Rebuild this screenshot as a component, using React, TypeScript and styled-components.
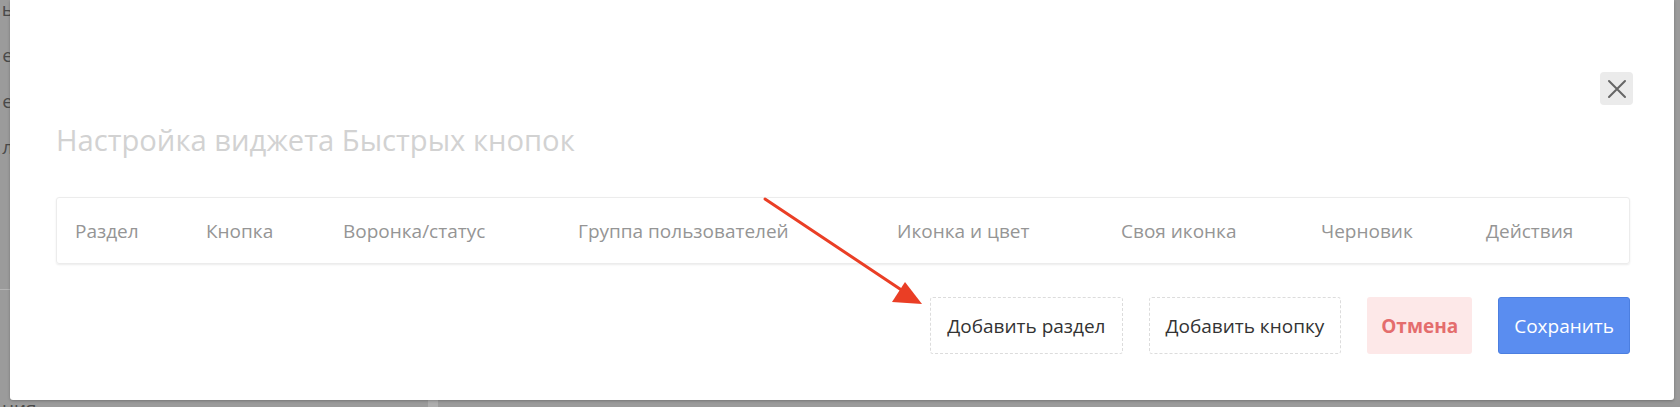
import React from 'react'
import styled, { createGlobalStyle } from 'styled-components'

const GlobalStyle = createGlobalStyle`
  html, body {
    margin: 0;
    padding: 0;
    background: #9b9b9b;
    font-family: 'Open Sans', 'Noto Sans', sans-serif;
  }
`

const Page = styled.div`
  display: flex;
  flex-direction: column;
  height: 407px;
  overflow: hidden;
  background: #9b9b9b;
`

const Stage = styled.div`
  display: flex;
  height: 400px;
`

const SideStrip = styled.div<{ $width: number }>`
  width: ${({ $width }) => $width}px;
  flex-shrink: 0;
  overflow: hidden;
  display: flex;
  flex-direction: column;
  align-items: flex-end;
  color: #4a4a4a;
  font-size: 19px;
  line-height: 46px;
  margin-top: -14px;
`

const StripWord = styled.div`
  white-space: nowrap;
  margin-right: -3px;
`

const StripRule = styled.div`
  align-self: stretch;
  height: 1px;
  background: #b4b4b4;
  margin-top: 119px;
`

const BottomStrip = styled.div`
  height: 7px;
  display: flex;
  overflow: hidden;
  color: #4a4a4a;
  font-size: 19px;
  line-height: 16px;
`

const BottomWord = styled.div`
  width: 428px;
  padding-left: 2px;
  box-sizing: border-box;
  white-space: nowrap;
`

const Thumb = styled.div`
  width: 10px;
  background: #adadad;
`

const BottomFill = styled.div<{ $tone: string }>`
  flex: ${({ $tone }) => ($tone === 'dark' ? '0 0 200px' : '1')};
  background: ${({ $tone }) => ($tone === 'dark' ? '#979797' : '#9b9b9b')};
`

const Modal = styled.div`
  position: relative;
  flex: 1;
  background: #fff;
  padding: 0 44px 0 46px;
  box-shadow: 0 1px 3px rgba(0, 0, 0, 0.25);
  border-radius: 0 0 3px 3px;
`

const CloseRow = styled.div`
  display: flex;
  justify-content: flex-end;
  padding-top: 72px;
  margin-right: -3px;
`

const CloseButton = styled.button`
  width: 33px;
  height: 33px;
  border: none;
  border-radius: 4px;
  background: #ebebeb;
  display: flex;
  align-items: center;
  justify-content: center;
  padding: 0;
`

const Title = styled.h2`
  margin: 17px 0 0;
  font-size: 29.2px;
  line-height: 36px;
  font-weight: 400;
  color: #d2d2d2;
`

const TableBox = styled.div`
  margin-top: 39px;
  height: 67px;
  border: 1px solid #ececec;
  border-radius: 3px;
  box-shadow: 0 1px 2px rgba(0, 0, 0, 0.08);
  box-sizing: border-box;
  display: grid;
  grid-template-columns: 131px 137px 235px 319px 224px 200px 165px auto;
  align-items: center;
  padding-left: 18px;
`

const HeadCell = styled.div`
  font-size: 19px;
  color: #959595;
  white-space: nowrap;
`

const Footer = styled.div`
  display: flex;
  justify-content: flex-end;
  gap: 26px;
  margin-top: 33px;
`

const Button = styled.button<{ $variant: 'dashed' | 'danger' | 'primary' }>`
  height: 57px;
  padding: 0 ${({ $variant }) => ($variant === 'danger' ? 13 : $variant === 'dashed' ? 16 : 15)}px;
  border-radius: 3px;
  font-family: 'Open Sans', 'Noto Sans', sans-serif;
  font-size: 19px;
  cursor: pointer;
  border: 1px ${({ $variant }) => ($variant === 'dashed' ? 'dashed #dcdcdc' : 'solid transparent')};
  background: ${({ $variant }) =>
    $variant === 'danger' ? '#fde8e8' : $variant === 'primary' ? '#5a8df0' : '#fff'};
  color: ${({ $variant }) =>
    $variant === 'danger' ? '#e46d6d' : $variant === 'primary' ? '#fff' : '#333'};
  font-weight: ${({ $variant }) => ($variant === 'danger' ? 700 : 400)};
  border-color: ${({ $variant }) => ($variant === 'primary' ? '#4c7fe0' : undefined)};
`

const Annotation = styled.svg`
  position: absolute;
  left: 745px;
  top: 195px;
  pointer-events: none;
`

const columns = [
  'Раздел',
  'Кнопка',
  'Воронка/статус',
  'Группа пользователей',
  'Иконка и цвет',
  'Своя иконка',
  'Черновик',
  'Действия',
]

const App = () => (
  <>
    <GlobalStyle />
    <Page>
      <Stage>
        <SideStrip $width={10}>
          <StripWord>ь</StripWord>
          <StripWord>е</StripWord>
          <StripWord>е</StripWord>
          <StripWord>л</StripWord>
          <StripRule />
        </SideStrip>
        <Modal>
          <CloseRow>
            <CloseButton aria-label="Закрыть">
              <svg width="20" height="20" viewBox="0 0 20 20">
                <path d="M2 2 L18 18 M18 2 L2 18" stroke="#666" strokeWidth="2" strokeLinecap="round" />
              </svg>
            </CloseButton>
          </CloseRow>
          <Title>Настройка виджета Быстрых кнопок</Title>
          <TableBox>
            {columns.map((c) => (
              <HeadCell key={c}>{c}</HeadCell>
            ))}
          </TableBox>
          <Footer>
            <Button $variant="dashed">Добавить раздел</Button>
            <Button $variant="dashed">Добавить кнопку</Button>
            <Button $variant="danger">Отмена</Button>
            <Button $variant="primary">Сохранить</Button>
          </Footer>
          <Annotation width="170" height="120" viewBox="0 0 170 120">
            <line x1="10" y1="4" x2="148" y2="96" stroke="#ea3e25" strokeWidth="3" strokeLinecap="round" />
            <polygon points="167,109 137,107 150,87" fill="#ea3e25" />
          </Annotation>
        </Modal>
        <SideStrip $width={6} />
      </Stage>
      <BottomStrip>
        <BottomWord>ния</BottomWord>
        <Thumb />
        <BottomFill $tone="light" />
        <BottomFill $tone="dark" />
      </BottomStrip>
    </Page>
  </>
)

export default App
